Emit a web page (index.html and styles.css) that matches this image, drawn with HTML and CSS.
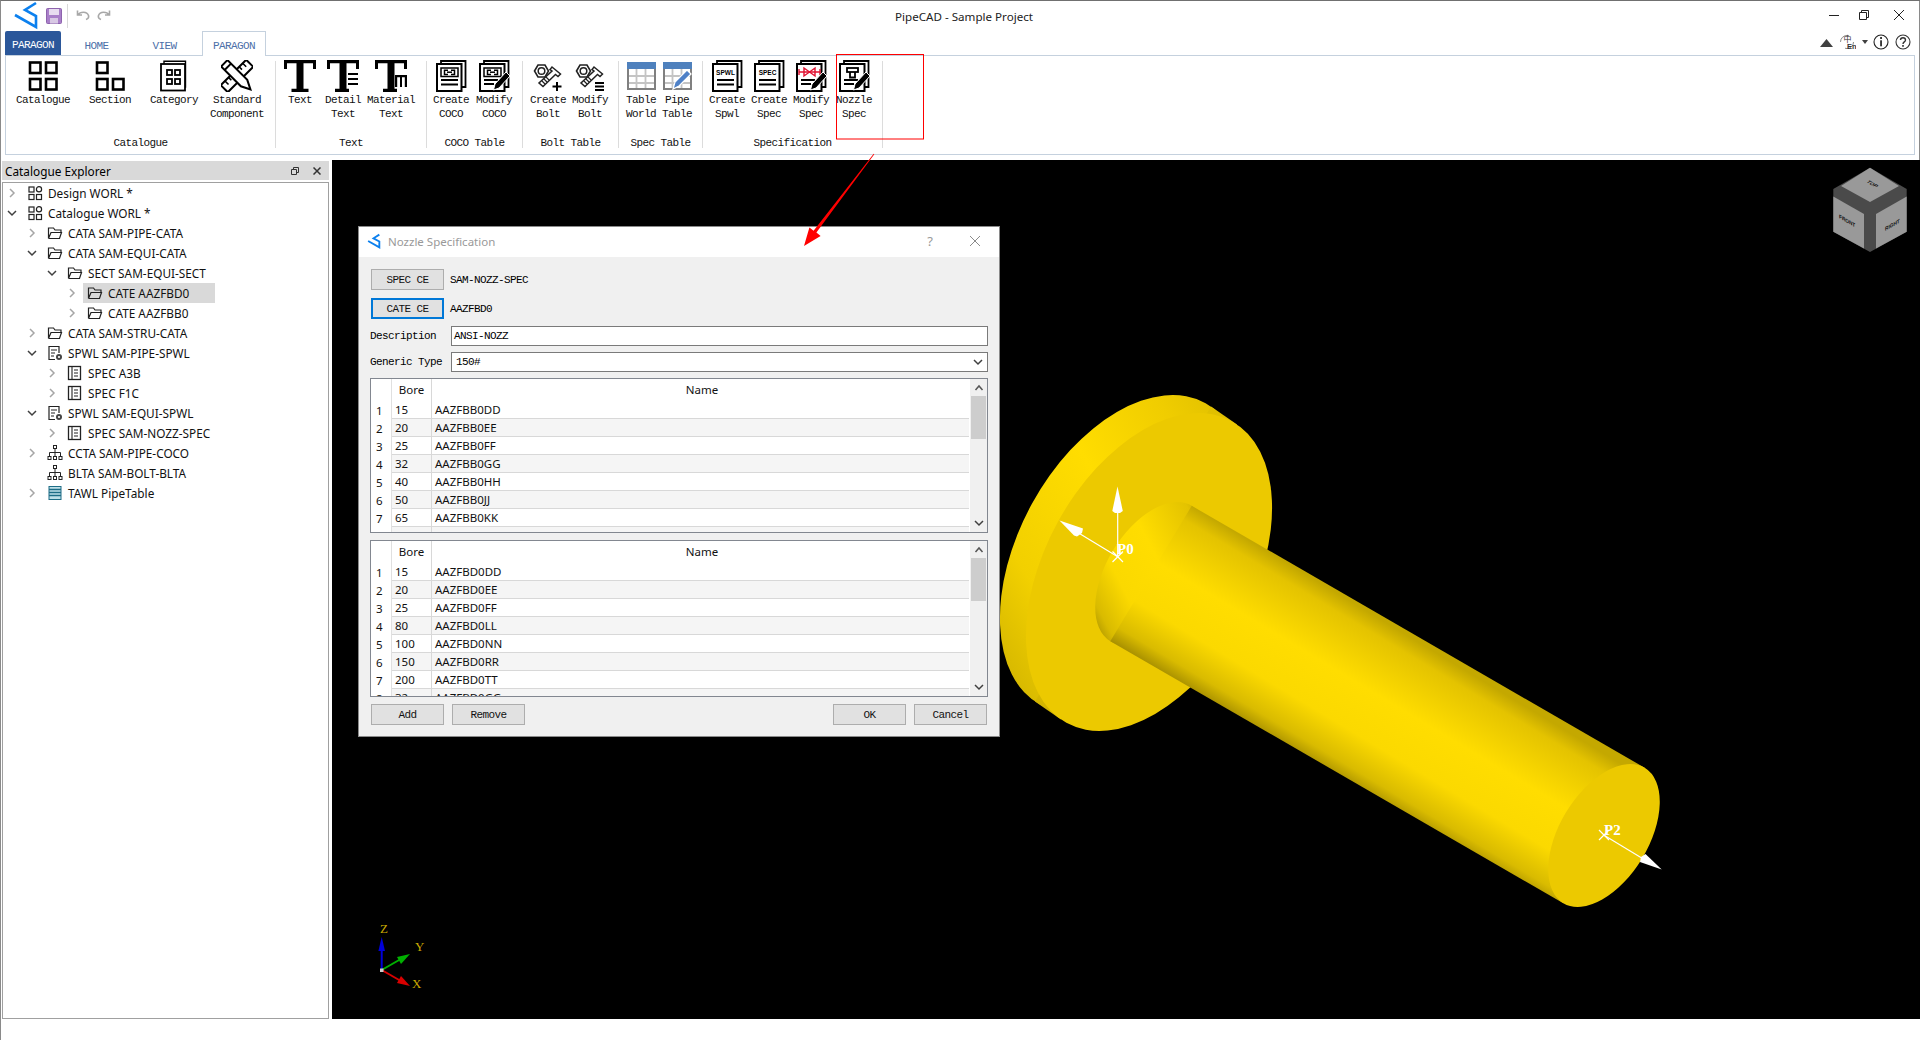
FILE: index.html
```html
<!DOCTYPE html>
<html lang="en">
<head>
<meta charset="utf-8">
<title>PipeCAD - Sample Project</title>
<link rel="stylesheet" href="styles.css">
</head>
<body>
<svg class="defs" width="0" height="0" aria-hidden="true">
  <symbol id="logo" viewBox="0 0 40 30"><path d="M35 3 L24 10 L35 16 V27 L14 15" fill="none" stroke="#0c80ee" stroke-width="2.6"/></symbol>
  <symbol id="chev-r" viewBox="0 0 10 10"><path d="M3 1 L7 5 L3 9" fill="none" stroke="#a6a6a6" stroke-width="1.5"/></symbol>
  <symbol id="chev-d" viewBox="0 0 10 10"><path d="M1 3 L5 7 L9 3" fill="none" stroke="#404040" stroke-width="1.5"/></symbol>
  <symbol id="chev-u" viewBox="0 0 10 10"><path d="M1.5 7 L5 3 L8.5 7" fill="none" stroke="#555" stroke-width="1.5"/></symbol>

  <!-- ribbon icons -->
  <symbol id="r-cat" viewBox="0 0 32 32"><g fill="none" stroke="#000" stroke-width="2.6"><rect x="3" y="2.5" width="10.5" height="10.5"/><rect x="19" y="2.5" width="10.5" height="10.5"/><rect x="3" y="19" width="10.5" height="10.5"/><rect x="19" y="19" width="10.5" height="10.5"/></g></symbol>
  <symbol id="r-sec" viewBox="0 0 32 32"><g fill="none" stroke="#000" stroke-width="2.6"><rect x="3" y="2.5" width="10.5" height="10.5"/><rect x="3" y="19" width="10.5" height="10.5"/><rect x="19" y="19" width="10.5" height="10.5"/></g></symbol>
  <symbol id="r-stack" viewBox="0 0 32 32"><path d="M6 3.500 V1 H30.500 V27 H27" fill="none" stroke="#000" stroke-width="1.800"/><rect x="2" y="4" width="24.500" height="27" fill="#fff" stroke="#000" stroke-width="2"/></symbol>
  <symbol id="r-pencil" viewBox="0 0 32 32"><path d="M28 12 L32 16 L21 28 L15.5 30 L17 24 Z" fill="#000" stroke="#fff" stroke-width="1"/></symbol>
  <symbol id="r-category" viewBox="0 0 32 32"><path d="M6 4 V1.2 H27.5 V27 H26" fill="none" stroke="#000" stroke-width="1.4"/><rect x="3" y="4" width="24" height="26.5" fill="#fff" stroke="#000" stroke-width="1.8"/><g fill="none" stroke="#000" stroke-width="1.8"><rect x="9" y="10" width="5" height="5"/><rect x="17" y="10" width="5" height="5"/><rect x="9" y="19" width="5" height="5"/><rect x="17" y="19" width="5" height="5"/></g></symbol>
  <symbol id="r-std" viewBox="0 0 32 32"><g stroke="#000" stroke-width="2" fill="#fff"><g transform="rotate(45 16 16)"><rect x="11" y="-2" width="10" height="36"/><path d="M11 3 H16 M11 8 H15 M11 23 H15 M11 28 H16" fill="none" stroke-width="1.6"/></g><g transform="rotate(-45 16 16)"><path d="M11.5 -2 H20.5 V26 L16 35 L11.5 26 Z"/><path d="M11.5 3 H20.5" fill="none"/></g></g></symbol>
  <symbol id="r-t" viewBox="0 0 32 32"><path d="M0 0 H32 V9 H29 V3.200 H19.500 V28.800 H24.500 V32 H7.500 V28.800 H12.500 V3.200 H3 V9 H0 Z"/></symbol>
  <symbol id="r-td" viewBox="0 0 32 32"><path d="M0 0 H32 V9 H29 V3.200 H19.500 V28.800 H22 V32 H8 V28.800 H12.500 V3.200 H3 V9 H0 Z"/><path d="M21 13 H31 V15 H21 Z M21 18 H31 V20 H21 Z M21 23 H31 V25 H21 Z"/></symbol>
  <symbol id="r-tm" viewBox="0 0 32 32"><path d="M0 0 H32 V9 H29 V3.200 H19.500 V28.800 H22 V32 H8 V28.800 H12.500 V3.200 H3 V9 H0 Z"/><path d="M20 15 H32 V27 H29.800 V17.200 H27 V27 H25 V17.200 H22.200 V27 H20 Z"/></symbol>
  <symbol id="r-bolt" viewBox="0 0 32 32"><path d="M2.5 11 L6 5 H13 L16.5 11 L13 17 H6 Z" fill="#fff" stroke="#222" stroke-width="1.6"/><circle cx="9.5" cy="11" r="3.3" fill="none" stroke="#222" stroke-width="1.5"/><path d="M20 7 L28.5 14 L26 16.5 L23.5 14.5 L11 26.5 L7 23 L20 11 L18 9.5 Z" fill="#fff" stroke="#222" stroke-width="1.5"/><path d="M10 21 L13 24 M12 19 L15 22 M14 17 L17 20" stroke="#222" stroke-width="1.2"/></symbol>
  <symbol id="r-table" viewBox="0 0 32 32"><rect x="3" y="3" width="27" height="26" fill="#fff" stroke="#808080" stroke-width="2"/><path d="M11.500 9 V28 M20.500 9 V28 M4 16 H29 M4 23 H29" stroke="#c4c4c4" stroke-width="1.800" fill="none"/><rect x="2" y="2" width="29" height="7" fill="#4f81bd"/></symbol>
  <symbol id="r-blue-pencil" viewBox="0 0 32 32"><path d="M26 10 L30 14 L18 26 L12 29 L14 22 Z" fill="#4f81c7" stroke="#fff" stroke-width="1.2"/></symbol>
  <symbol id="r-lines" viewBox="0 0 32 32"><path d="M6 20 H20 M6 24 H16" stroke="#000" stroke-width="1.8" fill="none"/></symbol>
  <symbol id="r-lines2" viewBox="0 0 32 32"><path d="M6 20 H23 M6 24.500 H23" stroke="#000" stroke-width="1.8" fill="none"/></symbol>
  <symbol id="r-link" viewBox="0 0 32 32"><g fill="none" stroke="#000" stroke-width="1.5"><rect x="6" y="8" width="17" height="8.500"/><path d="M12 12.200 H17"/><path d="M13 10.200 H9.500 V14.500 H13 M16 10.200 H19.500 V14.500 H16"/></g></symbol>
  <symbol id="r-valve" viewBox="0 0 32 32"><g stroke="#e01030" stroke-width="1.4" fill="none"><path d="M4 9 V15 M25 9 V15 M4 12 H25"/><path d="M9 8 L20 16 V8 L9 16 Z"/></g></symbol>
  <symbol id="r-nozzle" viewBox="0 0 32 32"><g fill="none" stroke="#000" stroke-width="1.8"><rect x="9" y="8" width="11" height="4"/><path d="M12 12 V17.500 H17 V12"/></g></symbol>

  <!-- tree icons -->
  <symbol id="t-world" viewBox="0 0 16 16"><g fill="none" stroke="#222" stroke-width="1.2"><rect x="2" y="2" width="5" height="5"/><rect x="2" y="9.500" width="5" height="5"/><rect x="9.500" y="9.500" width="5" height="5"/><circle cx="12" cy="4.300" r="2.600"/></g></symbol>
  <symbol id="t-folder" viewBox="0 0 16 16"><path d="M1.500 13.500 V3 H6.500 L8 5 H14 V7.500 M1.500 13.500 H12.500 L14.500 7.500 H4 L1.500 13.500" fill="none" stroke="#222" stroke-width="1.200"/></symbol>
  <symbol id="t-spwl" viewBox="0 0 16 16"><path d="M8 14.500 H2 V1.500 H12 V8" fill="none" stroke="#222" stroke-width="1.200"/><path d="M4 5 H10 M4 8 H8 M4 11 H7" stroke="#222" stroke-width="1.100"/><circle cx="12" cy="12" r="3" fill="#444"/><circle cx="12" cy="12" r="1.100" fill="#fff"/></symbol>
  <symbol id="t-spec" viewBox="0 0 16 16"><rect x="1.500" y="1.500" width="12" height="13" fill="none" stroke="#222" stroke-width="1.300"/><path d="M5 2 V14" stroke="#222" stroke-width="1.100"/><path d="M7 5 H11 M7 8 H11 M7 11 H11" stroke="#222" stroke-width="1.200"/></symbol>
  <symbol id="t-tree" viewBox="0 0 16 16"><g fill="none" stroke="#222" stroke-width="1"><rect x="6.500" y="0.500" width="3" height="3"/><rect x="1" y="11.500" width="3" height="3"/><rect x="6.500" y="11.500" width="3" height="3"/><rect x="12" y="11.500" width="3" height="3"/><path d="M8 3.500 V11.500 M2.500 11.500 V7.500 H13.500 V11.500"/></g></symbol>
  <symbol id="t-table" viewBox="0 0 16 16"><rect x="2" y="1.500" width="12" height="13" fill="#bfe0e8" stroke="#1e6d86"/><path d="M2 4.500 H14 M2 7.500 H14 M2 10.500 H14" stroke="#1e6d86" stroke-width="1.300"/></symbol>
</svg>

<div class="app">
  <div class="chrome">
    <div class="titlebar">
      <div class="qa">
        <svg class="qa-logo"><use href="#logo"/></svg>
        <svg class="qa-save" viewBox="0 0 16 16"><rect x="0.500" y="0.500" width="15" height="15" rx="1" fill="#a97fc9" stroke="#8d63ad"/><rect x="3" y="1" width="10" height="6" fill="#e8dcf0"/><rect x="4" y="10" width="8" height="5.500" fill="#d8c8e4"/></svg>
        <span class="qa-sep"></span>
        <svg class="qa-undo" viewBox="0 0 14 12"><path d="M1.500 1.500 V6 H6 M2 6 C4 2.500 11 2 12.500 6.500 C13 8.500 11.500 10 10 10.500" fill="none" stroke="#a8a8a8" stroke-width="1.600"/></svg>
        <svg class="qa-redo" viewBox="0 0 14 12"><path d="M12.500 1.500 V6 H8 M12 6 C10 2.500 3 2 1.500 6.500 C1 8.500 2.500 10 4 10.500" fill="none" stroke="#a8a8a8" stroke-width="1.600"/></svg>
      </div>
      <div class="app-title">PipeCAD - Sample Project</div>
      <div class="winctl">
        <svg viewBox="0 0 10 10" class="wb wb-min"><path d="M0 5.500 H10" stroke="#222"/></svg>
        <svg viewBox="0 0 10 10" class="wb wb-max"><path d="M.5 2.500 H7.500 V9.500 H.5 Z M2.500 2.500 V.5 H9.500 V7.500 H7.500" fill="none" stroke="#222"/></svg>
        <svg viewBox="0 0 10 10" class="wb wb-close"><path d="M0 0 L10 10 M10 0 L0 10" stroke="#222"/></svg>
      </div>
    </div>
    <div class="tabbar">
      <div class="tabs">
        <div class="tab tab-file mono">PARAGON</div>
        <div class="tab tab-home mono">HOME</div>
        <div class="tab tab-view mono">VIEW</div>
        <div class="tab tab-active mono">PARAGON</div>
      </div>
      <div class="help-icons">
        <svg class="hi-tri" viewBox="0 0 13 8"><path d="M6.500 0 L13 8 H0 Z" fill="#404040"/></svg>
        <svg class="hi-lang" viewBox="0 0 16 16"><circle cx="7" cy="8" r="6.500" fill="none" stroke="#888" stroke-dasharray="12 8"/><text x="3.500" y="8" class="hi-zh">中</text><text x="7" y="15" class="hi-en">En</text></svg>
        <svg class="hi-caret" viewBox="0 0 6 4"><path d="M0 0 H6 L3 4 Z" fill="#404040"/></svg>
        <svg class="hi-circ" viewBox="0 0 16 16"><circle cx="8" cy="8" r="7" fill="none" stroke="#222" stroke-width="1.100"/><rect x="7.200" y="3" width="1.700" height="2" fill="#222"/><rect x="7.200" y="6.300" width="1.700" height="6" fill="#222"/></svg>
        <svg class="hi-circ hi-q" viewBox="0 0 16 16"><circle cx="8" cy="8" r="7" fill="none" stroke="#333" stroke-width="1.100"/><path d="M5.500 6 C5.500 3 10.500 3 10.500 6 C10.500 8 8 7.800 8 10" fill="none" stroke="#333" stroke-width="1.400"/><rect x="7.200" y="11" width="1.600" height="1.800" fill="#333"/></svg>
      </div>
    </div>
    <div class="ribbon">
      <div class="group">
        <div class="items pad9">
          <div class="item w74"><svg class="ric"><use href="#r-cat"/></svg><span>Catalogue</span></div>
          <div class="item w60"><svg class="ric"><use href="#r-sec"/></svg><span>Section</span></div>
          <div class="item w68"><svg class="ric"><use href="#r-category"/></svg><span>Category</span></div>
          <div class="item w58"><svg class="ric"><use href="#r-std"/></svg><span>Standard<br>Component</span></div>
        </div>
        <div class="glabel">Catalogue</div>
      </div>
      <div class="group">
        <div class="items pad6">
          <div class="item w48"><svg class="ric"><use href="#r-t"/></svg><span>Text</span></div>
          <div class="item w38"><svg class="ric"><use href="#r-td"/></svg><span>Detail<br>Text</span></div>
          <div class="item w58"><svg class="ric"><use href="#r-tm"/></svg><span>Material<br>Text</span></div>
        </div>
        <div class="glabel">Text</div>
      </div>
      <div class="group">
        <div class="items pad9">
          <div class="item w48"><svg class="ric"><use href="#r-stack"/><use href="#r-link"/><use href="#r-lines2"/></svg><span>Create<br>COCO</span></div>
          <div class="item w38"><svg class="ric"><use href="#r-stack"/><use href="#r-link"/><use href="#r-lines"/><use href="#r-pencil"/></svg><span>Modify<br>COCO</span></div>
        </div>
        <div class="glabel">COCO Table</div>
      </div>
      <div class="group">
        <div class="items pad11">
          <div class="item w50"><svg class="ric" viewBox="0 0 32 32"><use href="#r-bolt"/><path d="M25 22 V31 M20.500 26.500 H29.500" stroke="#000" stroke-width="2"/></svg><span>Create<br>Bolt</span></div>
          <div class="item w34"><svg class="ric" viewBox="0 0 32 32"><use href="#r-bolt"/><path d="M21 23 H30 M21 26.500 H30 M21 30 H30" stroke="#000" stroke-width="1.800"/></svg><span>Modify<br>Bolt</span></div>
        </div>
        <div class="glabel">Bolt Table</div>
      </div>
      <div class="group">
        <div class="items pad11">
          <div class="item w44"><svg class="ric"><use href="#r-table"/></svg><span>Table<br>World</span></div>
          <div class="item w28"><svg class="ric"><use href="#r-table"/><use href="#r-blue-pencil"/></svg><span>Pipe<br>Table</span></div>
        </div>
        <div class="glabel">Spec Table</div>
      </div>
      <div class="group">
        <div class="items pad9">
          <div class="item w48"><svg class="ric" viewBox="0 0 32 32"><use href="#r-stack"/><text x="14.500" y="15" class="doc-text">SPWL</text><use href="#r-lines2"/></svg><span>Create<br>Spwl</span></div>
          <div class="item w36"><svg class="ric" viewBox="0 0 32 32"><use href="#r-stack"/><text x="14.500" y="15" class="doc-text">SPEC</text><use href="#r-lines2"/></svg><span>Create<br>Spec</span></div>
          <div class="item w48"><svg class="ric"><use href="#r-stack"/><use href="#r-valve"/><use href="#r-lines"/><use href="#r-pencil"/></svg><span>Modify<br>Spec</span></div>
          <div class="item w38"><svg class="ric"><use href="#r-stack"/><use href="#r-nozzle"/><use href="#r-lines"/><use href="#r-pencil"/></svg><span>Nozzle<br>Spec</span></div>
        </div>
        <div class="glabel">Specification</div>
      </div>
    </div>
  </div>

  <div class="main">
    <aside class="explorer">
      <div class="exp-head">
        <span class="exp-title">Catalogue Explorer</span>
        <svg class="exp-btn" viewBox="0 0 8 8"><path d="M.5 2.500 H5.500 V7.500 H.5 Z M2.500 2.500 V.5 H7.500 V5.500 H5.500" fill="none" stroke="#333"/></svg>
        <svg class="exp-btn exp-x" viewBox="0 0 8 8"><path d="M.5 .5 L7.500 7.500 M7.500 .5 L.5 7.500" stroke="#333" stroke-width="1.500"/></svg>
      </div>
      <div class="tree">
        <div class="row l0"><svg class="arrow"><use href="#chev-r"/></svg><span class="node"><svg class="tic"><use href="#t-world"/></svg>Design WORL *</span></div>
        <div class="row l0"><svg class="arrow"><use href="#chev-d"/></svg><span class="node"><svg class="tic"><use href="#t-world"/></svg>Catalogue WORL *</span></div>
        <div class="row l1"><svg class="arrow"><use href="#chev-r"/></svg><span class="node"><svg class="tic"><use href="#t-folder"/></svg>CATA SAM-PIPE-CATA</span></div>
        <div class="row l1"><svg class="arrow"><use href="#chev-d"/></svg><span class="node"><svg class="tic"><use href="#t-folder"/></svg>CATA SAM-EQUI-CATA</span></div>
        <div class="row l2"><svg class="arrow"><use href="#chev-d"/></svg><span class="node"><svg class="tic"><use href="#t-folder"/></svg>SECT SAM-EQUI-SECT</span></div>
        <div class="row l3"><svg class="arrow"><use href="#chev-r"/></svg><span class="node selected"><svg class="tic"><use href="#t-folder"/></svg>CATE AAZFBD0</span></div>
        <div class="row l3"><svg class="arrow"><use href="#chev-r"/></svg><span class="node"><svg class="tic"><use href="#t-folder"/></svg>CATE AAZFBB0</span></div>
        <div class="row l1"><svg class="arrow"><use href="#chev-r"/></svg><span class="node"><svg class="tic"><use href="#t-folder"/></svg>CATA SAM-STRU-CATA</span></div>
        <div class="row l1"><svg class="arrow"><use href="#chev-d"/></svg><span class="node"><svg class="tic"><use href="#t-spwl"/></svg>SPWL SAM-PIPE-SPWL</span></div>
        <div class="row l2"><svg class="arrow"><use href="#chev-r"/></svg><span class="node"><svg class="tic"><use href="#t-spec"/></svg>SPEC A3B</span></div>
        <div class="row l2"><svg class="arrow"><use href="#chev-r"/></svg><span class="node"><svg class="tic"><use href="#t-spec"/></svg>SPEC F1C</span></div>
        <div class="row l1"><svg class="arrow"><use href="#chev-d"/></svg><span class="node"><svg class="tic"><use href="#t-spwl"/></svg>SPWL SAM-EQUI-SPWL</span></div>
        <div class="row l2"><svg class="arrow"><use href="#chev-r"/></svg><span class="node"><svg class="tic"><use href="#t-spec"/></svg>SPEC SAM-NOZZ-SPEC</span></div>
        <div class="row l1"><svg class="arrow"><use href="#chev-r"/></svg><span class="node"><svg class="tic"><use href="#t-tree"/></svg>CCTA SAM-PIPE-COCO</span></div>
        <div class="row l1"><span class="arrow"></span><span class="node"><svg class="tic"><use href="#t-tree"/></svg>BLTA SAM-BOLT-BLTA</span></div>
        <div class="row l1"><svg class="arrow"><use href="#chev-r"/></svg><span class="node"><svg class="tic"><use href="#t-table"/></svg>TAWL PipeTable</span></div>
      </div>
    </aside>

    <section class="viewport">
      <svg class="scene" viewBox="332 160 1588 859" width="1588" height="859">
        <defs>
          <linearGradient id="rim" gradientUnits="userSpaceOnUse" x1="1215" y1="395" x2="1030" y2="715">
            <stop offset="0" stop-color="#dcbc00"/><stop offset=".2" stop-color="#f0cd00"/><stop offset=".45" stop-color="#ffdd00"/><stop offset=".75" stop-color="#f2d000"/><stop offset="1" stop-color="#cdb000"/>
          </linearGradient>
          <linearGradient id="cyl" gradientUnits="userSpaceOnUse" x1="1191.700" y1="505.800" x2="1110.300" y2="641.200">
            <stop offset="0" stop-color="#c4a800"/><stop offset=".1" stop-color="#e4c300"/><stop offset=".42" stop-color="#ffdd00"/><stop offset=".7" stop-color="#fbd900"/><stop offset=".9" stop-color="#d9bb00"/><stop offset="1" stop-color="#a89000"/>
          </linearGradient>
        </defs>
        <ellipse cx="1123" cy="554" rx="104" ry="172" transform="rotate(28.700 1123 554)" fill="url(#rim)"/>
        <polygon points="1211,406.500 1237,424.500 1061,719.500 1035,701.500" fill="url(#rim)"/>
        <ellipse cx="1149" cy="572" rx="104" ry="172" transform="rotate(28.700 1149 572)" fill="#ecc900"/>
        <ellipse cx="1151" cy="573.500" rx="44.500" ry="79" transform="rotate(31 1151 573.500)" fill="url(#cyl)"/>
        <polygon points="1191.700,505.800 1644.700,767.800 1563.300,903.200 1110.300,641.200" fill="url(#cyl)"/>
        <ellipse cx="1604" cy="835.500" rx="44.500" ry="79" transform="rotate(31 1604 835.500)" fill="#ecc900"/>

        <g class="marker">
          <path d="M1117.700 556.700 V507 M1117.700 556.700 L1072 529"/>
          <path d="M1112.500 551.500 L1123 562 M1123 551.500 L1112.500 562"/>
          <polygon points="1117.500,486.500 1122.800,511 1120,513 1115,513 1112.300,511"/>
          <polygon points="1059.500,520.500 1083,528.500 1082,533 1077,536.500 1074,535.500"/>
          <path d="M1603.700 835 L1645 860"/>
          <path d="M1599 830 L1609 840 M1609 830 L1599 840"/>
          <polygon points="1661.700,869.500 1640,862 1641,857 1645.500,854"/>
          <text x="1117" y="554" class="pt">P0</text>
          <text x="1604" y="835" class="pt">P2</text>
        </g>

        <g class="axes">
          <path d="M381.700 970 V950" stroke="#0000d8" stroke-width="2"/>
          <polygon points="381.700,937 385,951 378.400,951" fill="#0000d8"/>
          <path d="M381.700 970 L400 959.500" stroke="#00b000" stroke-width="2"/>
          <polygon points="410,954 401,964 397,957" fill="#00b000"/>
          <path d="M381.700 970 L400 980.500" stroke="#d80000" stroke-width="2"/>
          <polygon points="410,986 397,983 401,976" fill="#d80000"/>
          <rect x="380" y="968.500" width="3.500" height="3.500" fill="#ccc"/>
          <text x="380" y="933" class="axl">Z</text>
          <text x="415" y="951" class="axl">Y</text>
          <text x="412" y="988" class="axl">X</text>
        </g>

        <g class="cube">
          <polygon points="1870,167.700 1906.700,189 1906.700,231.700 1870,252 1833.300,231.700 1833.300,189" fill="#4a4a4a"/>
          <polygon points="1870,167.700 1899,186 1870,202 1841,186" fill="#999"/>
          <polygon points="1833.300,196.500 1864,214 1864,248.500 1833.300,231.700" fill="#999"/>
          <polygon points="1906.700,196.500 1876,214 1876,248.500 1906.700,231.700" fill="#999"/>
          <text transform="matrix(.86 .5 -.86 .5 1866 182)" class="cube-t">TOP</text>
          <text transform="matrix(.86 .5 0 1 1839 218)" class="cube-t">FRONT</text>
          <text transform="matrix(.86 -.5 0 1 1885 231)" class="cube-t">RIGHT</text>
        </g>
      </svg>

      <div class="dialog">
        <div class="dlg-title">
          <svg class="dlg-logo" viewBox="12 0 26 30"><path d="M35 3 L24 10 L35 16 V27 L14 15" fill="none" stroke="#0c80ee" stroke-width="3.500"/></svg>
          <span class="dlg-name">Nozzle Specification</span>
          <span class="dlg-help">?</span>
          <svg class="dlg-close" viewBox="0 0 10 10"><path d="M0 0 L10 10 M10 0 L0 10" stroke="#8a8a8a"/></svg>
        </div>
        <div class="dlg-body mono">
          <div class="field first">
            <button class="btn">SPEC CE</button><span class="val">SAM-NOZZ-SPEC</span>
          </div>
          <div class="field gap8">
            <button class="btn btn-focus">CATE CE</button><span class="val">AAZFBD0</span>
          </div>
          <div class="field gap7">
            <label class="lab">Description</label><div class="input">ANSI-NOZZ</div>
          </div>
          <div class="field gap6">
            <label class="lab">Generic Type</label><div class="input combo"><span>150#</span><svg class="combo-arrow"><use href="#chev-d"/></svg></div>
          </div>

          <div class="tbl gap6 tbl-a">
            <div class="tbl-main">
              <div class="tr th"><span class="n"></span><span class="b">Bore</span><span class="c">Name</span></div>
              <div class="tr"><span class="n">1</span><span class="b">15</span><span class="c">AAZFBB0DD</span></div>
              <div class="tr alt"><span class="n">2</span><span class="b">20</span><span class="c">AAZFBB0EE</span></div>
              <div class="tr"><span class="n">3</span><span class="b">25</span><span class="c">AAZFBB0FF</span></div>
              <div class="tr alt"><span class="n">4</span><span class="b">32</span><span class="c">AAZFBB0GG</span></div>
              <div class="tr"><span class="n">5</span><span class="b">40</span><span class="c">AAZFBB0HH</span></div>
              <div class="tr alt"><span class="n">6</span><span class="b">50</span><span class="c">AAZFBB0JJ</span></div>
              <div class="tr"><span class="n">7</span><span class="b">65</span><span class="c">AAZFBB0KK</span></div>
              <div class="tr alt"><span class="n">8</span><span class="b">80</span><span class="c">AAZFBB0LL</span></div>
            </div>
            <div class="sbar"><svg class="sb-a"><use href="#chev-u"/></svg><span class="thumb"></span><svg class="sb-a sb-down"><use href="#chev-d"/></svg></div>
          </div>

          <div class="tbl gap7 tbl-b">
            <div class="tbl-main">
              <div class="tr th"><span class="n"></span><span class="b">Bore</span><span class="c">Name</span></div>
              <div class="tr"><span class="n">1</span><span class="b">15</span><span class="c">AAZFBD0DD</span></div>
              <div class="tr alt"><span class="n">2</span><span class="b">20</span><span class="c">AAZFBD0EE</span></div>
              <div class="tr"><span class="n">3</span><span class="b">25</span><span class="c">AAZFBD0FF</span></div>
              <div class="tr alt"><span class="n">4</span><span class="b">80</span><span class="c">AAZFBD0LL</span></div>
              <div class="tr"><span class="n">5</span><span class="b">100</span><span class="c">AAZFBD0NN</span></div>
              <div class="tr alt"><span class="n">6</span><span class="b">150</span><span class="c">AAZFBD0RR</span></div>
              <div class="tr"><span class="n">7</span><span class="b">200</span><span class="c">AAZFBD0TT</span></div>
              <div class="tr alt"><span class="n">8</span><span class="b">32</span><span class="c">AAZFBD0GG</span></div>
            </div>
            <div class="sbar"><svg class="sb-a"><use href="#chev-u"/></svg><span class="thumb"></span><svg class="sb-a sb-down"><use href="#chev-d"/></svg></div>
          </div>

          <div class="actions gap7">
            <button class="btn">Add</button>
            <button class="btn">Remove</button>
            <span class="spacer"></span>
            <button class="btn">OK</button>
            <button class="btn">Cancel</button>
          </div>
        </div>
      </div>
    </section>
  </div>
  <div class="statusbar"></div>

  <svg class="annot" width="1920" height="1040" viewBox="0 0 1920 1040">
    <rect x="836.500" y="54.500" width="87" height="84.500" fill="none" stroke="#f00"/>
    <polygon points="874.300,154.200 816.400,232.600 820.600,235.900 804,246 809.400,227.500 813.600,230.700 873.700,153.800" fill="#f00"/>
  </svg>
</div>
</body>
</html>
```

FILE: styles.css
```css
* { box-sizing: border-box; }

html, body {
  margin: 0;
  padding: 0;
  background: #fff;
}

body {
  font-family: "Noto Sans", "Open Sans", sans-serif;
  font-size: 11.8px;
  color: #000;
  overflow: hidden;
}

.defs { position: absolute; }

.mono {
  font-family: "Liberation Mono", monospace;
  font-size: 11px;
  letter-spacing: -0.6px;
}

.app {
  position: relative;
  width: 1920px;
  height: 1040px;
  display: flex;
  flex-direction: column;
  border-top: 1px solid #707070;
  border-left: 1px solid #8a8a8a;
  background: #fff;
}

.chrome { border-right: 1px solid #8a8a8a; flex: none; }

/* title bar */
.titlebar {
  height: 30px;
  display: grid;
  grid-template-columns: 1fr auto 1fr;
  align-items: center;
}

.qa { display: flex; align-items: center; height: 30px; }
.qa-logo { width: 40px; height: 30px; margin-right: 5px; flex: none; margin-top: -2px; }
.qa-save { width: 16px; height: 16px; margin-right: 5px; flex: none; margin-top: -1px; }
.qa-sep { width: 1px; height: 24px; background: #d9d9d9; margin-right: 8px; }
.qa-undo, .qa-redo { width: 14px; height: 12px; flex: none; margin-right: 7px; margin-top: -3px; }

.app-title { padding-left: 8px; font-size: 11.6px; color: #222; margin-top: 1px; }

.winctl { display: flex; justify-content: flex-end; align-items: center; padding-right: 15px; gap: 20px; }
.wb { width: 10px; height: 10px; flex: none; margin-top: -3px; }
.wb-close { margin-left: 5px; }

/* tabs */
.tabbar { height: 24px; display: flex; justify-content: space-between; padding-left: 4px; }
.tabs { display: flex; }
.tab { height: 24px; display: flex; align-items: center; justify-content: center; color: #4c6fa8; padding-top: 5px; }
.tab-file { width: 56px; background: #2b579a; color: #fff; padding-top: 3px; border-radius: 2px 2px 0 0; }
.tab-home { width: 71px; }
.tab-view { width: 65px; margin-right: 5px; }
.tab-active {
  width: 64px;
  height: 25px;
  background: #fff;
  border: 1px solid #c5d1de;
  border-bottom: 0;
  position: relative;
  z-index: 2;
  padding-top: 4px;
}

.help-icons { display: flex; align-items: center; padding-right: 8px; padding-bottom: 3px; }
.hi-tri { width: 13px; height: 8px; margin-right: 7px; margin-top: 2px; }
.hi-lang { width: 16px; height: 16px; margin-right: 6px; }
.hi-caret { width: 6px; height: 4px; margin-right: 5px; margin-top: 1px; }
.hi-circ { width: 16px; height: 16px; }
.hi-q { margin-left: 6px; }
.hi-zh { font-family: "Noto Sans CJK SC", sans-serif; font-size: 8px; fill: #333; }
.hi-en { font-family: "Liberation Sans", sans-serif; font-size: 7.500px; font-weight: 700; fill: #333; }

/* ribbon */
.ribbon {
  height: 100px;
  margin: 0 4px 5px;
  border: 1px solid #c5d1de;
  padding-top: 5px;
  display: flex;
  align-items: flex-start;
  font-family: "Liberation Mono", monospace;
  font-size: 11px;
  letter-spacing: -0.6px;
  color: #111;
}

.group {
  height: 87px;
  display: flex;
  flex-direction: column;
  justify-content: space-between;
  border-right: 1px solid #dcdcdc;
  flex: none;
}

.items { display: flex; }
.pad6 { padding-right: 6px; }
.pad9 { padding-right: 9px; }
.pad11 { padding-right: 11px; }

.item {
  display: flex;
  flex-direction: column;
  align-items: center;
  flex: none;
  margin-top: -1px;
  line-height: 14px;
  text-align: center;
  white-space: nowrap;
}

.ric { width: 32px; height: 32px; margin-bottom: 1px; flex: none; }
.doc-text { font-family: "Liberation Sans", sans-serif; font-size: 6.500px; font-weight: 700; text-anchor: middle; letter-spacing: 0; }

.w28 { width: 28px; } .w34 { width: 34px; } .w36 { width: 36px; } .w38 { width: 38px; }
.w44 { width: 44px; } .w48 { width: 48px; } .w50 { width: 50px; } .w58 { width: 58px; }
.w60 { width: 60px; } .w68 { width: 68px; } .w74 { width: 74px; }

.glabel { text-align: center; line-height: 14px; margin-bottom: -2px; white-space: nowrap; }

/* main */
.main { flex: 1; display: flex; min-height: 0; }

.explorer {
  width: 331px;
  flex: none;
  padding: 1px 3px 0 1px;
  display: flex;
  flex-direction: column;
}

.exp-head {
  height: 19px;
  background: #d9d9d9;
  display: flex;
  align-items: center;
  padding: 0 8px 0 3px;
  flex: none;
}
.exp-title { flex: 1; }
.exp-btn { width: 8px; height: 8px; }
.exp-x { margin-left: 14px; }

.tree {
  flex: 1;
  margin-top: 2px;
  border: 1px solid #a0a0a0;
  min-height: 0;
  color: #111;
}

.row { height: 20px; display: flex; align-items: center; white-space: nowrap; }
.l1 { padding-left: 20px; }
.l2 { padding-left: 40px; }
.l3 { padding-left: 60px; }

.arrow { width: 10px; height: 10px; margin: 0 6px 0 4px; flex: none; display: block; }
.node { display: flex; align-items: center; height: 20px; padding-left: 4px; gap: 5px; }
.node.selected { background: #d9d9d9; width: 132px; }
.tic { width: 16px; height: 16px; flex: none; }

/* viewport */
.viewport { flex: 1; position: relative; background: #000; overflow: hidden; }
.scene { position: absolute; left: 0; top: 0; display: block; }

.marker path { stroke: #fff; stroke-width: 1.200; fill: none; }
.marker polygon { fill: #fff; }
.pt { font-family: "Liberation Serif", serif; font-weight: 700; font-size: 15px; fill: #fff; }
.axl { font-family: "Liberation Serif", serif; font-size: 13px; fill: #c9a800; }
.cube-t { font-family: "Liberation Sans", sans-serif; font-size: 5.500px; font-weight: 700; fill: #111; }

/* dialog */
.dialog {
  position: absolute;
  left: 27px;
  top: 67px;
  width: 640px;
  height: 509px;
  background: #f0f0f0;
  display: flex;
  flex-direction: column;
  box-shadow: 0 0 0 1px #8a8a8a;
}

.dlg-title {
  height: 30px;
  flex: none;
  background: #fff;
  display: flex;
  align-items: center;
  padding: 0 19px 2px 8px;
  color: #999;
  font-size: 11.500px;
}
.dlg-logo { width: 14px; height: 16px; margin-right: 7px; flex: none; }
.dlg-name { flex: 1; }
.dlg-help { margin-right: 37px; font-size: 13px; }
.dlg-close { width: 10px; height: 10px; }

.dlg-body {
  flex: 1;
  padding: 12px 11px 11px 11px;
  display: flex;
  flex-direction: column;
}

.field { display: flex; align-items: center; flex: none; }
.gap6 { margin-top: 6px; }
.gap7 { margin-top: 7px; }
.gap8 { margin-top: 8px; }

.btn {
  width: 73px;
  height: 21px;
  background: #e1e1e1;
  border: 1px solid #adadad;
  padding: 0;
  font: inherit;
  letter-spacing: inherit;
  color: #111;
  flex: none;
}
.field .btn { margin-left: 1px; }
.btn-focus { border: 2px solid #0078d7; }

.val { margin-left: 6px; }
.lab { width: 81px; flex: none; }

.input {
  flex: 1;
  height: 20px;
  background: #fff;
  border: 1px solid #7a7a7a;
  padding-left: 2px;
  display: flex;
  align-items: center;
}
.combo { padding-left: 4px; justify-content: space-between; padding-right: 4px; }
.combo-arrow { width: 10px; height: 10px; }

.tbl {
  flex: none;
  background: #fff;
  border: 1px solid #828790;
  display: flex;
  overflow: hidden;
  font-family: "Noto Sans", sans-serif;
  font-size: 11.500px;
  letter-spacing: 0;
  color: #111;
}
.tbl-a { height: 155px; }
.tbl-b { height: 157px; }

.tbl-main { flex: 1; min-width: 0; }

.tr { display: flex; height: 18px; line-height: 17px; }
.th { height: 22px; line-height: 21px; }
.n { width: 21px; flex: none; padding-left: 5px; padding-top: 1px; border-right: 1px solid #e0e0e0; }
.b { width: 40px; flex: none; padding-left: 3px; border-right: 1px solid #d8d8d8; border-bottom: 1px solid #d8d8d8; }
.c { flex: 1; padding-left: 3px; border-bottom: 1px solid #d8d8d8; }
.alt .b, .alt .c { background: #f5f5f5; }
.th .b { text-align: center; padding-left: 0; border-bottom: 0; }
.th .c { text-align: center; border-bottom: 0; }

.sbar {
  width: 18px;
  flex: none;
  background: #f0f0f0;
  border-left: 1px solid #fff;
  display: flex;
  flex-direction: column;
  align-items: center;
}
.sb-a { width: 10px; height: 10px; margin: 4px 0 3px; flex: none; }
.sb-down { margin: auto 0 4px; }
.thumb { width: 15px; height: 43px; background: #cdcdcd; flex: none; }

.actions { display: flex; padding: 0 1px; gap: 8px; flex: none; }
.spacer { flex: 1; }

.statusbar { height: 21px; flex: none; background: #fff; }

.annot { position: absolute; left: -1px; top: -1px; pointer-events: none; z-index: 5; }
```
